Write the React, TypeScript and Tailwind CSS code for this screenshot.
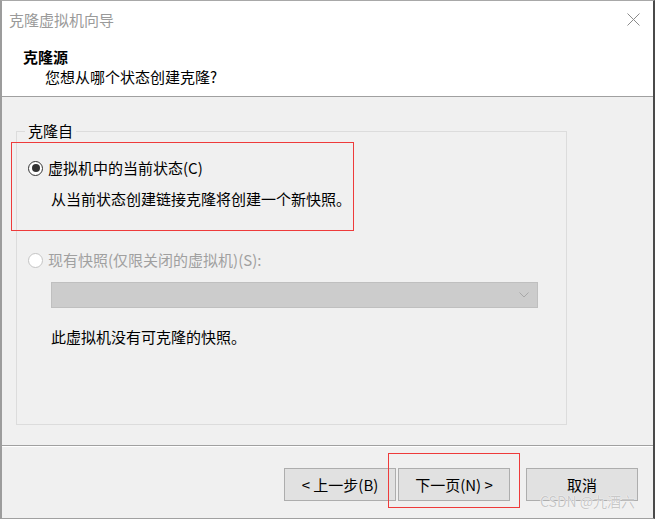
import React from 'react';

const font = { fontFamily: '"Noto Sans CJK SC", "Microsoft YaHei", sans-serif' };

const Radio: React.FC<{ checked?: boolean; disabled?: boolean }> = ({ checked, disabled }) => {
  if (disabled) {
    return <span className="inline-block w-[15px] h-[15px] rounded-full border border-[#c4c4c4] bg-white shrink-0" />;
  }
  return (
    <span className="flex items-center justify-center w-[15px] h-[15px] rounded-full border-[1.5px] border-[#333333] bg-white shrink-0">
      {checked && <span className="block w-[8px] h-[8px] rounded-full bg-[#333333]" />}
    </span>
  );
};

const Button: React.FC<{ label: string; className?: string }> = ({ label, className = '' }) => (
  <button
    className={`h-[33px] w-[112px] border border-[#adadad] bg-[#e1e1e1] text-[15px] text-black leading-none ${className}`}
  >
    {label}
  </button>
);

export default function App() {
  return (
    <div
      className="relative w-[655px] h-[519px] flex flex-col bg-[#f0f0f0] border-t border-b border-l-2 border-r-2 border-t-[#a8a8a8] border-b-[#a0a0a0] border-l-[#9c9c9c] border-r-[#4a4a4a] text-black overflow-hidden"
      style={font}
    >
      {/* header */}
      <div className="h-[96px] bg-white border-b border-[#a0a0a0] shrink-0">
        <div className="h-[38px] flex items-center justify-between pl-[7px] pr-[13px]">
          <span className="text-[15px] text-[#9a9a9a] leading-[20px]">克隆虚拟机向导</span>
          <svg width="13" height="13" viewBox="0 0 13 13" className="mb-[1px]">
            <path d="M0.5 0.5 L12.5 12.5 M12.5 0.5 L0.5 12.5" stroke="#8a8a8a" strokeWidth="1" />
          </svg>
        </div>
        <div className="mt-[8px] pl-[21px] text-[15px] font-bold leading-[20px]">克隆源</div>
        <div className="pl-[43px] text-[15px] leading-[20px]">您想从哪个状态创建克隆?</div>
      </div>

      {/* body */}
      <div className="h-[348px] shrink-0 pt-[34px]">
        <div className="relative ml-[14px] w-[551px] h-[294px] border border-[#dcdcdc]">
          <span className="absolute -top-[11px] left-[8px] px-[3px] bg-[#f0f0f0] text-[15px] leading-[20px]">
            克隆自
          </span>
          <div className="pt-[26px] pl-[11px] flex flex-col">
            <div className="h-[20px] flex items-center gap-[5px]">
              <Radio checked />
              <span className="text-[15px] leading-[20px]">虚拟机中的当前状态(C)</span>
            </div>
            <div className="mt-[11px] pl-[23px] text-[15px] leading-[20px]">
              从当前状态创建链接克隆将创建一个新快照。
            </div>
            <div className="mt-[41px] h-[20px] flex items-center gap-[5px]">
              <Radio disabled />
              <span className="text-[15px] leading-[20px] text-[#a0a0a0]">现有快照(仅限关闭的虚拟机)(S):</span>
            </div>
            <div className="mt-[12px] ml-[23px] w-[487px] h-[26px] bg-[#cccccc] border border-[#bfbfbf] flex items-center justify-end pr-[8px]">
              <svg width="10" height="6" viewBox="0 0 10 6">
                <path d="M0.5 0.5 L5 5 L9.5 0.5" stroke="#a8a8a8" strokeWidth="1" fill="none" />
              </svg>
            </div>
            <div className="mt-[19px] pl-[23px] text-[15px] leading-[20px]">此虚拟机没有可克隆的快照。</div>
          </div>
        </div>
      </div>

      {/* footer */}
      <div className="border-t border-[#a0a0a0] shrink-0" />
      <div className="border-t border-white shrink-0" />
      <div className="flex-1 flex items-start justify-end pt-[21px] pr-[15px]">
        <Button label="< 上一步(B)" className="w-[111px]" />
        <Button label="下一页(N) >" className="ml-[2px]" />
        <Button label="取消" className="ml-[16px]" />
      </div>

      {/* annotations */}
      <div className="absolute left-[9px] top-[141px] w-[343px] h-[89px] border border-[#ee3b3b] pointer-events-none" />
      <div className="absolute left-[386px] top-[452px] w-[132px] h-[55px] border border-[#ee3b3b] pointer-events-none" />
      <span
        className="absolute left-[538px] top-[490px] text-[14px] leading-[20px] text-[#c8c8c8] pointer-events-none"
        style={{ ...font, textShadow: '0 0 1px #ffffff, 0 0 1px #ffffff' }}
      >
        CSDN @九酒六
      </span>
    </div>
  );
}
